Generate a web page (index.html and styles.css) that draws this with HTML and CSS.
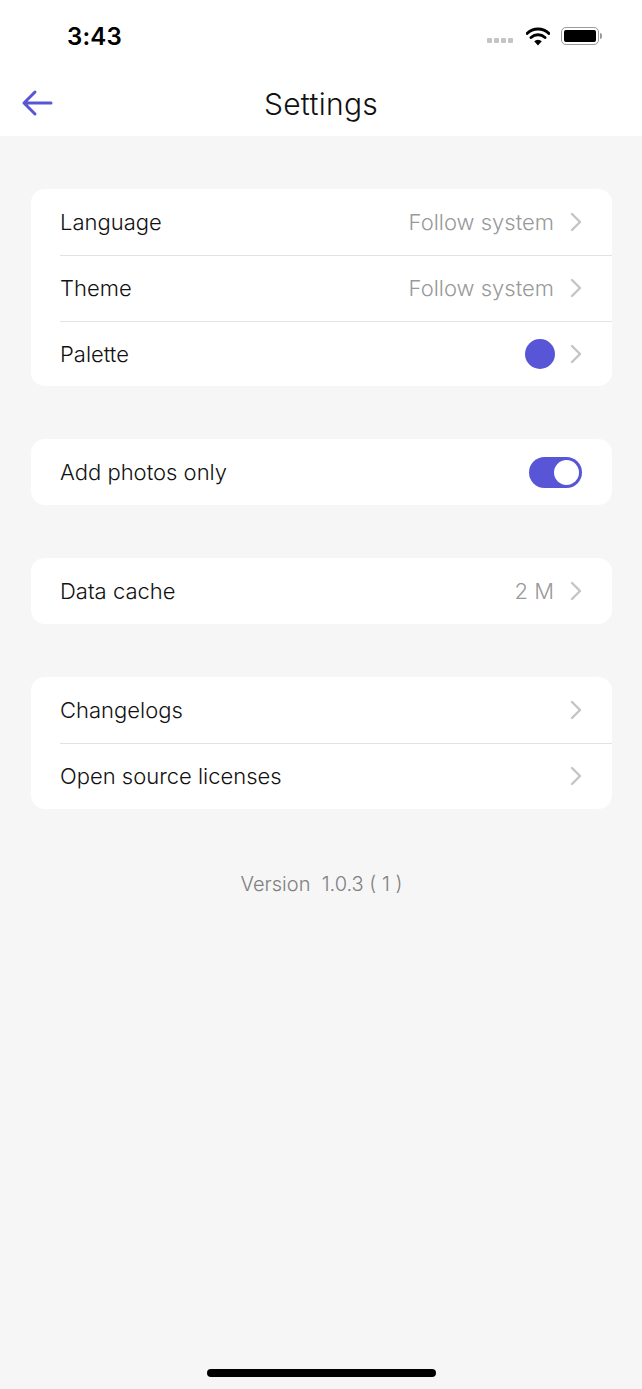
FILE: index.html
```html
<!DOCTYPE html>
<html>
<head>
<meta charset="utf-8">
<link rel="stylesheet" href="styles.css">
</head>
<body>
<div class="screen">
  <header class="top">
    <div class="status">
      <span class="time">3:43</span>
      <div class="status-icons">
        <span class="dots"><i></i><i></i><i></i><i></i></span>
        <svg class="wifi" width="24" height="19" viewBox="0 0 24 19">
          <path d="M1 6.5 A16 16 0 0 1 23 6.5" fill="none" stroke="#000" stroke-width="3" stroke-linecap="round"/>
          <path d="M5 10.5 A10.5 10.5 0 0 1 19 10.5" fill="none" stroke="#000" stroke-width="3" stroke-linecap="round"/>
          <path d="M12 18.5 L8.2 14.2 A5.5 5.5 0 0 1 15.8 14.2 Z" fill="#000"/>
        </svg>
        <span class="battery"><span class="level"></span></span><span class="nub"></span>
      </div>
    </div>
    <nav class="navbar">
      <svg class="back" width="34" height="28" viewBox="0 0 34 28">
        <path d="M31 14 H4 M15 3 L4 14 L15 25" fill="none" stroke="#5856d6" stroke-width="3" stroke-linecap="round" stroke-linejoin="round"/>
      </svg>
      <h1 class="title">Settings</h1>
    </nav>
  </header>

  <main class="content">
    <section class="card">
      <div class="row">
        <span class="label">Language</span>
        <span class="value">Follow system</span>
        <svg class="chev" width="12" height="20" viewBox="0 0 12 20"><path d="M2 2 L10 10 L2 18" fill="none" stroke="#c4c4c4" stroke-width="2.4" stroke-linecap="round" stroke-linejoin="round"/></svg>
      </div>
      <div class="row">
        <span class="label">Theme</span>
        <span class="value">Follow system</span>
        <svg class="chev" width="12" height="20" viewBox="0 0 12 20"><path d="M2 2 L10 10 L2 18" fill="none" stroke="#c4c4c4" stroke-width="2.4" stroke-linecap="round" stroke-linejoin="round"/></svg>
      </div>
      <div class="row">
        <span class="label">Palette</span>
        <span class="swatch"></span>
        <svg class="chev" width="12" height="20" viewBox="0 0 12 20"><path d="M2 2 L10 10 L2 18" fill="none" stroke="#c4c4c4" stroke-width="2.4" stroke-linecap="round" stroke-linejoin="round"/></svg>
      </div>
    </section>

    <section class="card">
      <div class="row">
        <span class="label">Add photos only</span>
        <span class="toggle"><span class="knob"></span></span>
      </div>
    </section>

    <section class="card">
      <div class="row">
        <span class="label">Data cache</span>
        <span class="value">2 M</span>
        <svg class="chev" width="12" height="20" viewBox="0 0 12 20"><path d="M2 2 L10 10 L2 18" fill="none" stroke="#c4c4c4" stroke-width="2.4" stroke-linecap="round" stroke-linejoin="round"/></svg>
      </div>
    </section>

    <section class="card">
      <div class="row">
        <span class="label">Changelogs</span>
        <svg class="chev" width="12" height="20" viewBox="0 0 12 20"><path d="M2 2 L10 10 L2 18" fill="none" stroke="#c4c4c4" stroke-width="2.4" stroke-linecap="round" stroke-linejoin="round"/></svg>
      </div>
      <div class="row">
        <span class="label">Open source licenses</span>
        <svg class="chev" width="12" height="20" viewBox="0 0 12 20"><path d="M2 2 L10 10 L2 18" fill="none" stroke="#c4c4c4" stroke-width="2.4" stroke-linecap="round" stroke-linejoin="round"/></svg>
      </div>
    </section>

    <p class="version">Version&nbsp;&nbsp;1.0.3 ( 1 )</p>
  </main>

  <div class="home-indicator"></div>
</div>
</body>
</html>
```
FILE: styles.css
```css
* { box-sizing: border-box; }
html, body {
  margin: 0;
  padding: 0;
  background: #f6f6f6;
  font-family: "Inter", "Liberation Sans", sans-serif;
}
.screen {
  width: 642px;
  height: 1389px;
  display: flex;
  flex-direction: column;
  position: relative;
  background: #f6f6f6;
  overflow: hidden;
}
.top {
  background: #fff;
  height: 136px;
  display: flex;
  flex-direction: column;
}
.status {
  height: 70px;
  display: flex;
  align-items: center;
  justify-content: space-between;
  padding: 0 40px 0 67px;
}
.time {
  font-family: "Inter", sans-serif;
  font-weight: 600;
  font-size: 24px;
  color: #000;
  letter-spacing: 0.2px;
  margin-top: 2px;
}
.status-icons {
  display: flex;
  align-items: center;
  margin-top: 2px;
}
.dots {
  display: flex;
  gap: 2px;
  margin-right: 13px;
  margin-top: 8px;
}
.dots i {
  display: block;
  width: 5px;
  height: 5px;
  border-radius: 1px;
  background: #c4c4c4;
}
.wifi { margin-right: 11px; }
.battery {
  width: 38px;
  height: 18px;
  border: 1.5px solid #9a9a9a;
  border-radius: 5px;
  padding: 2px;
  display: flex;
}
.level {
  flex: 1;
  background: #000;
  border-radius: 2px;
}
.nub {
  width: 2px;
  height: 6px;
  background: #9a9a9a;
  border-radius: 0 2px 2px 0;
  margin-left: 1px;
}
.navbar {
  flex: 1;
  display: flex;
  align-items: center;
  justify-content: center;
  position: relative;
}
.back {
  position: absolute;
  left: 20px;
  top: 19px;
}
.title {
  margin: 0;
  font-size: 30px;
  font-weight: 300;
  color: #111;
  margin-top: 2px;
  letter-spacing: 0.3px;
}
.content {
  flex: 1;
  display: flex;
  flex-direction: column;
  gap: 53px;
  padding: 53px 30px 0 31px;
}
.card {
  background: #fff;
  border-radius: 14px;
  padding-left: 29px;
  display: flex;
  flex-direction: column;
}
.row {
  height: 66px;
  display: flex;
  align-items: center;
  padding-right: 30px;
}
.row + .row {
  height: 65.5px;
  border-top: 1px solid #e2e2e2;
}
.label {
  flex: 1;
  font-size: 22px;
  font-weight: 300;
  color: #111;
}
.value {
  font-size: 22px;
  font-weight: 300;
  color: #999;
  margin-right: 16px;
}
.chev { display: block; }
.swatch {
  width: 30px;
  height: 30px;
  border-radius: 50%;
  background: #5856d6;
  margin-right: 15px;
}
.toggle {
  width: 53px;
  height: 31px;
  border-radius: 16px;
  background: #5856d6;
  display: flex;
  align-items: center;
  justify-content: flex-end;
  padding-right: 3px;
}
.knob {
  width: 25px;
  height: 25px;
  border-radius: 50%;
  background: #fff;
}
.version {
  margin: 10px 0 0;
  text-align: center;
  font-size: 20px;
  font-weight: 300;
  color: #808080;
}
.home-indicator {
  position: absolute;
  left: 207px;
  bottom: 12px;
  width: 229px;
  height: 8px;
  border-radius: 4px;
  background: #000;
}
```
